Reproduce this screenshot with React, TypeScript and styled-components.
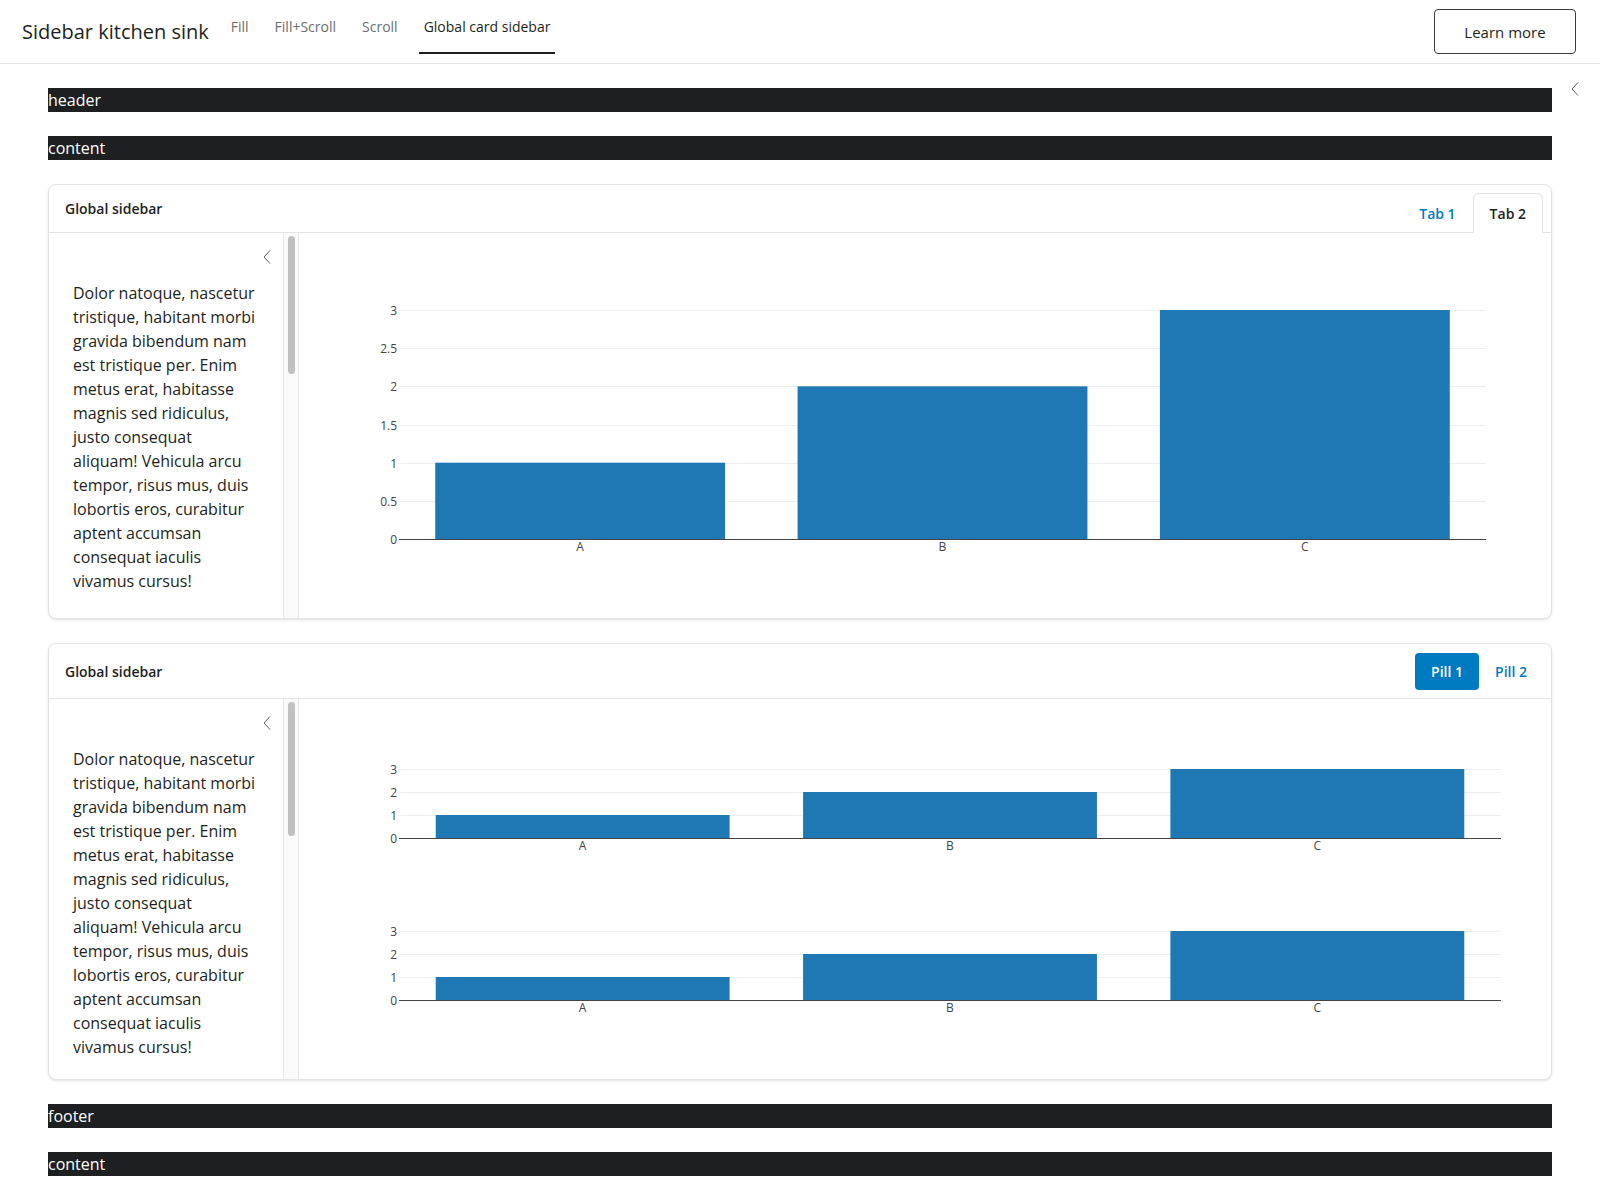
import styled, { createGlobalStyle } from "styled-components";

const GlobalStyle = createGlobalStyle`
  * {
    box-sizing: border-box;
  }
  body {
    margin: 0;
    font-family: "Open Sans", "Liberation Sans", sans-serif;
    color: #1d1f21;
    background: #ffffff;
  }
`;

const SPage = styled.div`
  display: flex;
  flex-direction: column;
`;

const SNavbar = styled.nav`
  display: flex;
  align-items: flex-start;
  height: 64px;
  padding: 0 24px 0 22px;
  border-bottom: 1px solid #e4e4e4;
`;

const SBrand = styled.div`
  align-self: center;
  margin-right: 17px;
  font-size: 20px;
  line-height: 28px;
`;

const SNavList = styled.ul`
  display: flex;
  gap: 16px;
  margin: 0;
  padding: 0;
  list-style: none;
`;

const SNavLink = styled.li<{ $active?: boolean }>`
  height: 54px;
  padding: 16px 5px 0;
  font-size: 14px;
  line-height: 21px;
  color: ${(p) => (p.$active ? "#1d1f21" : "#6b6d6f")};
  border-bottom: 2px solid ${(p) => (p.$active ? "#1d1f21" : "transparent")};
`;

const SLearnMore = styled.button`
  margin-left: auto;
  margin-top: 9px;
  width: 142px;
  height: 45px;
  border: 1px solid #3a3c3e;
  border-radius: 4px;
  background: #ffffff;
  color: #1d1f21;
  font-family: inherit;
  font-size: 15px;
`;

const SLayout = styled.main`
  position: relative;
  display: flex;
  flex-direction: column;
  gap: 24px;
  padding: 24px 48px;
`;

const SPageToggle = styled.div`
  position: absolute;
  top: 18px;
  right: 21px;
  display: flex;
`;

const SBar = styled.div`
  height: 24px;
  line-height: 24px;
  font-size: 16px;
  background: #1d1f21;
  color: #ffffff;
`;

const SCard = styled.section`
  display: flex;
  flex-direction: column;
  border: 1px solid #e3e4e5;
  border-radius: 8px;
  background: #ffffff;
  box-shadow: 0 1px 2px rgba(0, 0, 0, 0.08), 0 2px 4px rgba(0, 0, 0, 0.04);
  overflow: hidden;
`;

const SCardHeader = styled.header<{ $tabs?: boolean }>`
  display: flex;
  align-items: ${(p) => (p.$tabs ? "flex-end" : "center")};
  justify-content: space-between;
  height: ${(p) => (p.$tabs ? "48px" : "55px")};
  padding: ${(p) => (p.$tabs ? "8px 8px 0 16px" : "8px 8px 8px 16px")};
  border-bottom: 1px solid #e3e4e5;
`;

const SCardTitle = styled.div<{ $tabs?: boolean }>`
  align-self: center;
  margin-top: ${(p) => (p.$tabs ? "-8px" : "0")};
  font-size: 14px;
  font-weight: 600;
`;

const SNav = styled.div`
  display: flex;
`;

const STab = styled.div<{ $active?: boolean }>`
  height: 40px;
  margin-bottom: -1px;
  padding: 9px 16px 8px;
  font-size: 14px;
  font-weight: 600;
  line-height: 21px;
  color: ${(p) => (p.$active ? "#1d1f21" : "#007bc2")};
  background: ${(p) => (p.$active ? "#ffffff" : "transparent")};
  border: 1px solid ${(p) => (p.$active ? "#dee2e6" : "transparent")};
  border-bottom-color: ${(p) => (p.$active ? "#ffffff" : "transparent")};
  border-radius: 6px 6px 0 0;
`;

const SPill = styled.div<{ $active?: boolean }>`
  padding: 8px 16px;
  font-size: 14px;
  font-weight: 600;
  line-height: 21px;
  color: ${(p) => (p.$active ? "#ffffff" : "#007bc2")};
  background: ${(p) => (p.$active ? "#007bc2" : "transparent")};
  border-radius: 4px;
`;

const SCardBody = styled.div<{ $height: number }>`
  display: flex;
  height: ${(p) => p.$height}px;
`;

const SSidebar = styled.aside`
  display: flex;
  flex: 0 0 250px;
  border-right: 1px solid #e8e8e8;
`;

const SSidebarInner = styled.div`
  flex: 1;
  min-width: 0;
  overflow: hidden;
  padding: 12px 24px 24px;
`;

const SScrollTrack = styled.div`
  flex: 0 0 15px;
  padding: 3px 3px 0 4px;
  background: #fafafa;
  border-left: 1px solid #e8e8e8;
`;

const SScrollThumb = styled.div<{ $length: number }>`
  height: ${(p) => p.$length}px;
  border-radius: 4px;
  background: #c1c1c1;
`;

const SToggleRow = styled.div`
  display: flex;
  justify-content: flex-end;
  align-items: center;
  height: 24px;
  margin: 0 -12px 12px 0;
`;

const SText = styled.p`
  margin: 0;
  font-size: 16px;
  line-height: 24px;
`;

const SMain = styled.div`
  flex: 1;
  overflow: hidden;
`;

const LOREM =
  "Dolor natoque, nascetur tristique, habitant morbi gravida bibendum nam est tristique per. Enim metus erat, habitasse magnis sed ridiculus, justo consequat aliquam! Vehicula arcu tempor, risus mus, duis lobortis eros, curabitur aptent accumsan consequat iaculis vivamus cursus!";

const Chevron = () => (
  <svg width="8" height="14" viewBox="0 0 8 14">
    <path d="M7 0.5 L1 7 L7 13.5" fill="none" stroke="#5a5c5e" strokeWidth="1" />
  </svg>
);

type Panel = { y3: number; y0: number; step: number };

const CATS = ["A", "B", "C"];
const VALUES = [1, 2, 3];

const BarChart = ({
  height,
  left,
  right,
  panels,
}: {
  height: number;
  left: number;
  right: number;
  panels: Panel[];
}) => {
  const catW = (right - left) / 3;
  return (
    <svg width="1260" height={height} fontFamily="'Open Sans', 'Liberation Sans', sans-serif">
      {panels.map((p, pi) => {
        const unit = (p.y0 - p.y3) / 3;
        const ticks: number[] = [];
        for (let v = 0; v <= 3.001; v += p.step) ticks.push(Math.round(v * 10) / 10);
        return (
          <g key={pi}>
            {ticks.map((t) => {
              const y = Math.round(p.y0 - t * unit) + 0.5;
              return (
                <g key={t}>
                  {t > 0 && <line x1={left} x2={right} y1={y} y2={y} stroke="#eeeeee" />}
                  <text x={left - 2} y={y + 4} fontSize="12" fill="#444" textAnchor="end">
                    {t}
                  </text>
                </g>
              );
            })}
            {VALUES.map((v, i) => (
              <rect
                key={i}
                x={left + catW * i + catW * 0.1}
                y={p.y0 - v * unit}
                width={catW * 0.8}
                height={v * unit}
                fill="#1f77b4"
              />
            ))}
            <line x1={left} x2={right} y1={p.y0 + 0.5} y2={p.y0 + 0.5} stroke="#444" />
            {CATS.map((c, i) => (
              <text
                key={c}
                x={left + catW * (i + 0.5)}
                y={p.y0 + 12}
                fontSize="12"
                fill="#444"
                textAnchor="middle"
              >
                {c}
              </text>
            ))}
          </g>
        );
      })}
    </svg>
  );
};

const Sidebar = ({ thumb }: { thumb: number }) => (
  <SSidebar>
    <SSidebarInner>
      <SToggleRow>
        <Chevron />
      </SToggleRow>
      <SText>{LOREM}</SText>
    </SSidebarInner>
    <SScrollTrack>
      <SScrollThumb $length={thumb} />
    </SScrollTrack>
  </SSidebar>
);

const App = () => {
  return (
    <SPage>
      <GlobalStyle />
      <SNavbar>
        <SBrand>Sidebar kitchen sink</SBrand>
        <SNavList>
          <SNavLink>Fill</SNavLink>
          <SNavLink>Fill+Scroll</SNavLink>
          <SNavLink>Scroll</SNavLink>
          <SNavLink $active>Global card sidebar</SNavLink>
        </SNavList>
        <SLearnMore>Learn more</SLearnMore>
      </SNavbar>
      <SLayout>
        <SPageToggle>
          <Chevron />
        </SPageToggle>
        <SBar>header</SBar>
        <SBar>content</SBar>

        <SCard>
          <SCardHeader $tabs>
            <SCardTitle $tabs>Global sidebar</SCardTitle>
            <SNav>
              <STab>Tab 1</STab>
              <STab $active>Tab 2</STab>
            </SNav>
          </SCardHeader>
          <SCardBody $height={385}>
            <Sidebar thumb={138} />
            <SMain>
              <BarChart height={385} left={100} right={1187} panels={[{ y3: 77, y0: 306, step: 0.5 }]} />
            </SMain>
          </SCardBody>
        </SCard>

        <SCard>
          <SCardHeader>
            <SCardTitle>Global sidebar</SCardTitle>
            <SNav>
              <SPill $active>Pill 1</SPill>
              <SPill>Pill 2</SPill>
            </SNav>
          </SCardHeader>
          <SCardBody $height={380}>
            <Sidebar thumb={134} />
            <SMain>
              <BarChart
                height={380}
                left={100}
                right={1202}
                panels={[
                  { y3: 70, y0: 139, step: 1 },
                  { y3: 232, y0: 301, step: 1 },
                ]}
              />
            </SMain>
          </SCardBody>
        </SCard>

        <SBar>footer</SBar>
        <SBar>content</SBar>
      </SLayout>
    </SPage>
  );
};

export default App;
